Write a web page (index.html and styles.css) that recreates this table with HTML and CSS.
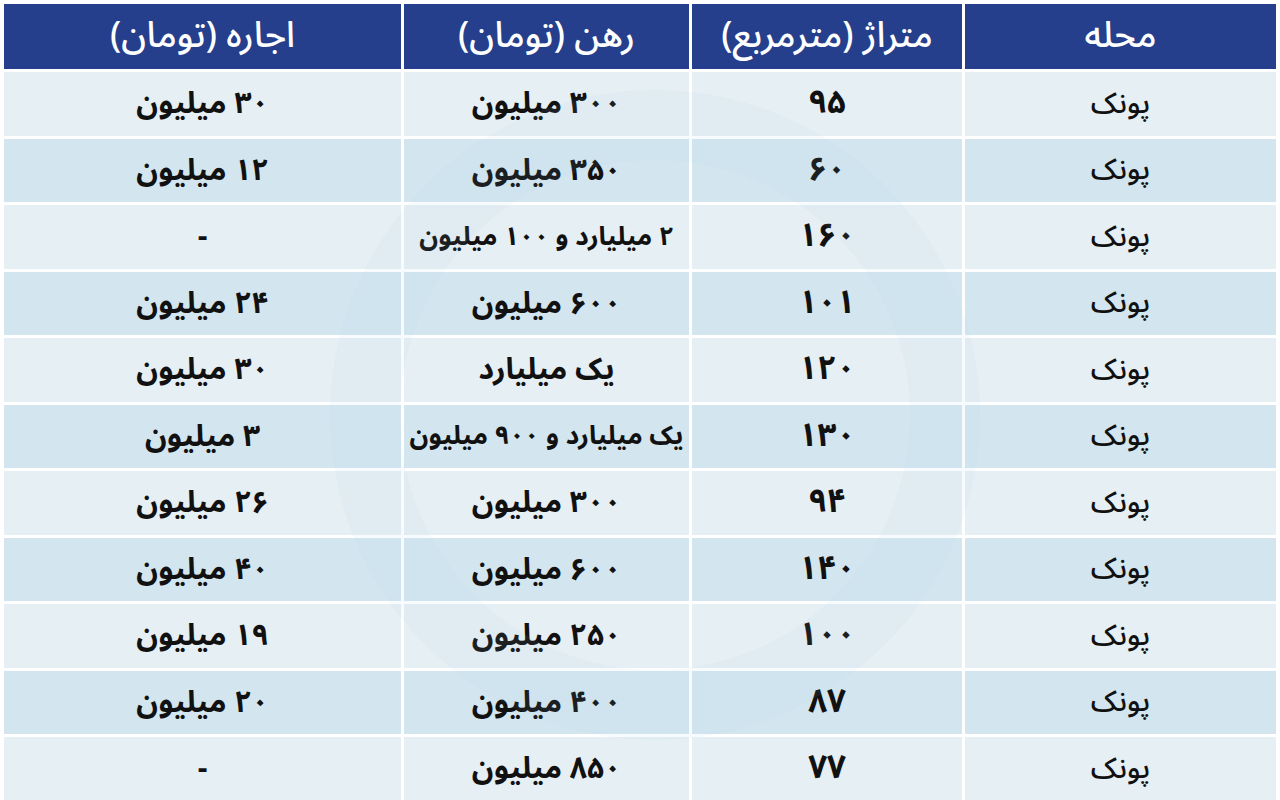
FILE: index.html
```html
<!DOCTYPE html>
<html lang="fa" dir="rtl">
<head>
<meta charset="utf-8">
<link rel="stylesheet" href="styles.css">
</head>
<body>
<div class="sheet">
  <div class="grid">
    <div class="cell head">محله</div>
    <div class="cell head">متراژ (مترمربع)</div>
    <div class="cell head">رهن (تومان)</div>
    <div class="cell head">اجاره (تومان)</div>

    <div class="cell a name">پونک</div><div class="cell a num">۹۵</div><div class="cell a val">۳۰۰ میلیون</div><div class="cell a val">۳۰ میلیون</div>
    <div class="cell b name">پونک</div><div class="cell b num">۶۰</div><div class="cell b val">۳۵۰ میلیون</div><div class="cell b val">۱۲ میلیون</div>
    <div class="cell a name">پونک</div><div class="cell a num">۱۶۰</div><div class="cell a val long">۲ میلیارد و ۱۰۰ میلیون</div><div class="cell a val">-</div>
    <div class="cell b name">پونک</div><div class="cell b num">۱۰۱</div><div class="cell b val">۶۰۰ میلیون</div><div class="cell b val">۲۴ میلیون</div>
    <div class="cell a name">پونک</div><div class="cell a num">۱۲۰</div><div class="cell a val">یک میلیارد</div><div class="cell a val">۳۰ میلیون</div>
    <div class="cell b name">پونک</div><div class="cell b num">۱۳۰</div><div class="cell b val long">یک میلیارد و ۹۰۰ میلیون</div><div class="cell b val">۳ میلیون</div>
    <div class="cell a name">پونک</div><div class="cell a num">۹۴</div><div class="cell a val">۳۰۰ میلیون</div><div class="cell a val">۲۶ میلیون</div>
    <div class="cell b name">پونک</div><div class="cell b num">۱۴۰</div><div class="cell b val">۶۰۰ میلیون</div><div class="cell b val">۴۰ میلیون</div>
    <div class="cell a name">پونک</div><div class="cell a num">۱۰۰</div><div class="cell a val">۲۵۰ میلیون</div><div class="cell a val">۱۹ میلیون</div>
    <div class="cell b name">پونک</div><div class="cell b num">۸۷</div><div class="cell b val">۴۰۰ میلیون</div><div class="cell b val">۲۰ میلیون</div>
    <div class="cell a name">پونک</div><div class="cell a num">۷۷</div><div class="cell a val">۸۵۰ میلیون</div><div class="cell a val">-</div>
  </div>
  <div class="mark"></div>
</div>
</body>
</html>
```

FILE: styles.css
```css
html, body {
  margin: 0;
  padding: 0;
  background: #ffffff;
}
body {
  width: 1280px;
  height: 800px;
  overflow: hidden;
  font-family: "Noto Sans Arabic", "DejaVu Sans", "Noto Sans", sans-serif;
}
.sheet {
  position: relative;
  padding: 4px 4px 0 4px;
}
.grid {
  display: grid;
  grid-template-columns: 311px 270px 285px 1fr;
  grid-template-rows: 65px repeat(11, 63.5px);
  gap: 3px;
}
.cell {
  display: flex;
  align-items: center;
  justify-content: center;
  font-size: 30px;
  color: #111;
  white-space: nowrap;
  line-height: 1.3;
  overflow: visible;
}
.head {
  background: #253f8d;
  color: #ffffff;
  font-size: 36px;
  font-weight: 500;
}
.a { background: #e6eff4; }
.b { background: #d3e6ef; }
.name { font-weight: 500; font-size: 29px; }
.num { font-weight: 700; font-size: 33px; }
.val { font-weight: 700; }
.val.long { font-size: 26px; }
.mark {
  position: absolute;
  left: 330px;
  top: 90px;
  width: 650px;
  height: 650px;
  border-radius: 50%;
  border: 70px solid rgba(170, 205, 225, 0.08);
  box-sizing: border-box;
  pointer-events: none;
}
```
